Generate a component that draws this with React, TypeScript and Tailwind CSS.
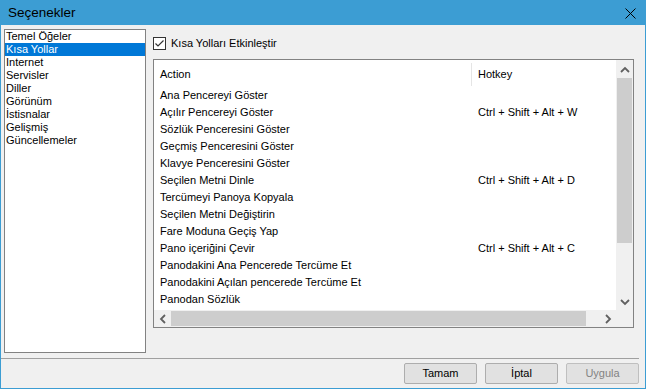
import React from 'react';

const categories = ['Temel Öğeler', 'Kısa Yollar', 'Internet', 'Servisler', 'Diller', 'Görünüm', 'İstisnalar', 'Gelişmiş', 'Güncellemeler'];

const shortcuts = [
  { action: 'Ana Pencereyi Göster', key: '' },
  { action: 'Açılır Pencereyi Göster', key: 'Ctrl + Shift + Alt + W' },
  { action: 'Sözlük Penceresini Göster', key: '' },
  { action: 'Geçmiş Penceresini Göster', key: '' },
  { action: 'Klavye Penceresini Göster', key: '' },
  { action: 'Seçilen Metni Dinle', key: 'Ctrl + Shift + Alt + D' },
  { action: 'Tercümeyi Panoya Kopyala', key: '' },
  { action: 'Seçilen Metni Değiştirin', key: '' },
  { action: 'Fare Moduna Geçiş Yap', key: '' },
  { action: 'Pano içeriğini Çevir', key: 'Ctrl + Shift + Alt + C' },
  { action: 'Panodakini Ana Pencerede Tercüme Et', key: '' },
  { action: 'Panodakini Açılan pencerede Tercüme Et', key: '' },
  { action: 'Panodan Sözlük', key: '' },
];

const Chevron = ({ dir }: { dir: 'up' | 'down' | 'left' | 'right' }) => {
  const pts = {
    up: '4,10 8,6 12,10',
    down: '4,6 8,10 12,6',
    left: '10,4 6,8 10,12',
    right: '6,4 10,8 6,12',
  }[dir];
  return (
    <svg width="16" height="16" viewBox="0 0 16 16">
      <polyline points={pts} fill="none" stroke="#606060" strokeWidth="1.8" />
    </svg>
  );
};

const Btn = ({ label, disabled }: { label: string; disabled?: boolean }) => (
  <button className={`w-[73px] h-[21px] rounded-[2px] border text-[11px] leading-none ${disabled ? 'border-[#bfbfbf] bg-[#e1e1e1] text-[#838383]' : 'border-[#adadad] bg-[#e1e1e1] text-black'}`}>
    {label}
  </button>
);

export default function App() {
  return (
    <div className="w-[646px] h-[389px] flex flex-col border border-[#3c9dd3] bg-[#f0f0f0] overflow-hidden" style={{ fontFamily: '"Liberation Sans", Arial, sans-serif' }}>
      {/* Title bar */}
      <div className="h-[24px] shrink-0 bg-[#3c9dd3] flex items-center justify-between pl-[7px] pr-[9px]">
        <span className="text-[13.5px] text-black">Seçenekler</span>
        <svg width="11" height="11" viewBox="0 0 11 11">
          <path d="M0.5 0.5 L10.5 10.5 M10.5 0.5 L0.5 10.5" stroke="#000" strokeWidth="1" />
        </svg>
      </div>

      <div className="flex flex-col pt-[4px] text-[11px] text-black">
        <div className="flex h-[324px] pl-[3px]">
          {/* Category list */}
          <div className="w-[142px] h-full border border-[#828282] bg-white">
            {categories.map((c, i) => (
              <div key={c} className={`h-[13px] leading-[13px] pl-[1px] ${i === 1 ? 'bg-[#0078d7] text-white' : ''}`}>
                {c}
              </div>
            ))}
          </div>

          {/* Right panel */}
          <div className="ml-[7px] w-[481px] flex flex-col">
            <div className="mt-[8px] h-[13px] flex items-center">
              <div className="w-[13px] h-[13px] border border-[#333] bg-white flex items-center justify-center">
                <svg width="11" height="11" viewBox="0 0 11 11">
                  <path d="M1.5 5.5 L4 8 L9.5 2.5" fill="none" stroke="#333" strokeWidth="1.2" />
                </svg>
              </div>
              <span className="ml-[5px]">Kısa Yolları Etkinleştir</span>
            </div>

            <div className="mt-[9px] h-[269px] border border-[#828282] bg-white flex flex-col">
              <div className="flex h-[250px]">
                <div className="w-[462px] flex flex-col">
                  <div className="h-[26px] flex items-center shrink-0 pt-[2px]">
                    <div className="w-[317px] pl-[6px]">Action</div>
                    <div className="w-px h-[23px] bg-[#e5e5e5]" />
                    <div className="pl-[6px]">Hotkey</div>
                  </div>
                  <div className="mt-[1px]">
                    {shortcuts.map(s => (
                      <div key={s.action} className="flex h-[17px] items-center">
                        <div className="w-[318px] pl-[6px] whitespace-nowrap">{s.action}</div>
                        <div className="pl-[6px] whitespace-nowrap">{s.key}</div>
                      </div>
                    ))}
                  </div>
                </div>
                {/* Vertical scrollbar */}
                <div className="w-[17px] bg-[#f0f0f0] flex flex-col">
                  <div className="h-[18px] flex items-center justify-center pt-[1px]"><Chevron dir="up" /></div>
                  <div className="h-[165px] mx-[1px] bg-[#cdcdcd]" />
                  <div className="flex-1" />
                  <div className="h-[17px] flex items-center justify-center"><Chevron dir="down" /></div>
                </div>
              </div>
              {/* Horizontal scrollbar */}
              <div className="flex h-[17px] bg-[#f0f0f0]">
                <div className="w-[17px] flex items-center justify-center"><Chevron dir="left" /></div>
                <div className="w-[415px] my-[1px] bg-[#cdcdcd]" />
                <div className="flex-1" />
                <div className="w-[17px] flex items-center justify-center"><Chevron dir="right" /></div>
                <div className="w-[17px] bg-[#f0f0f0]" />
              </div>
            </div>
          </div>
        </div>

        <div className="mt-[5px] h-px w-[638px] bg-[#a0a0a0]" />

        <div className="mt-[4px] flex justify-end gap-[8px] pr-[6px]">
          <Btn label="Tamam" />
          <Btn label="İptal" />
          <Btn label="Uygula" disabled />
        </div>
      </div>
    </div>
  );
}
